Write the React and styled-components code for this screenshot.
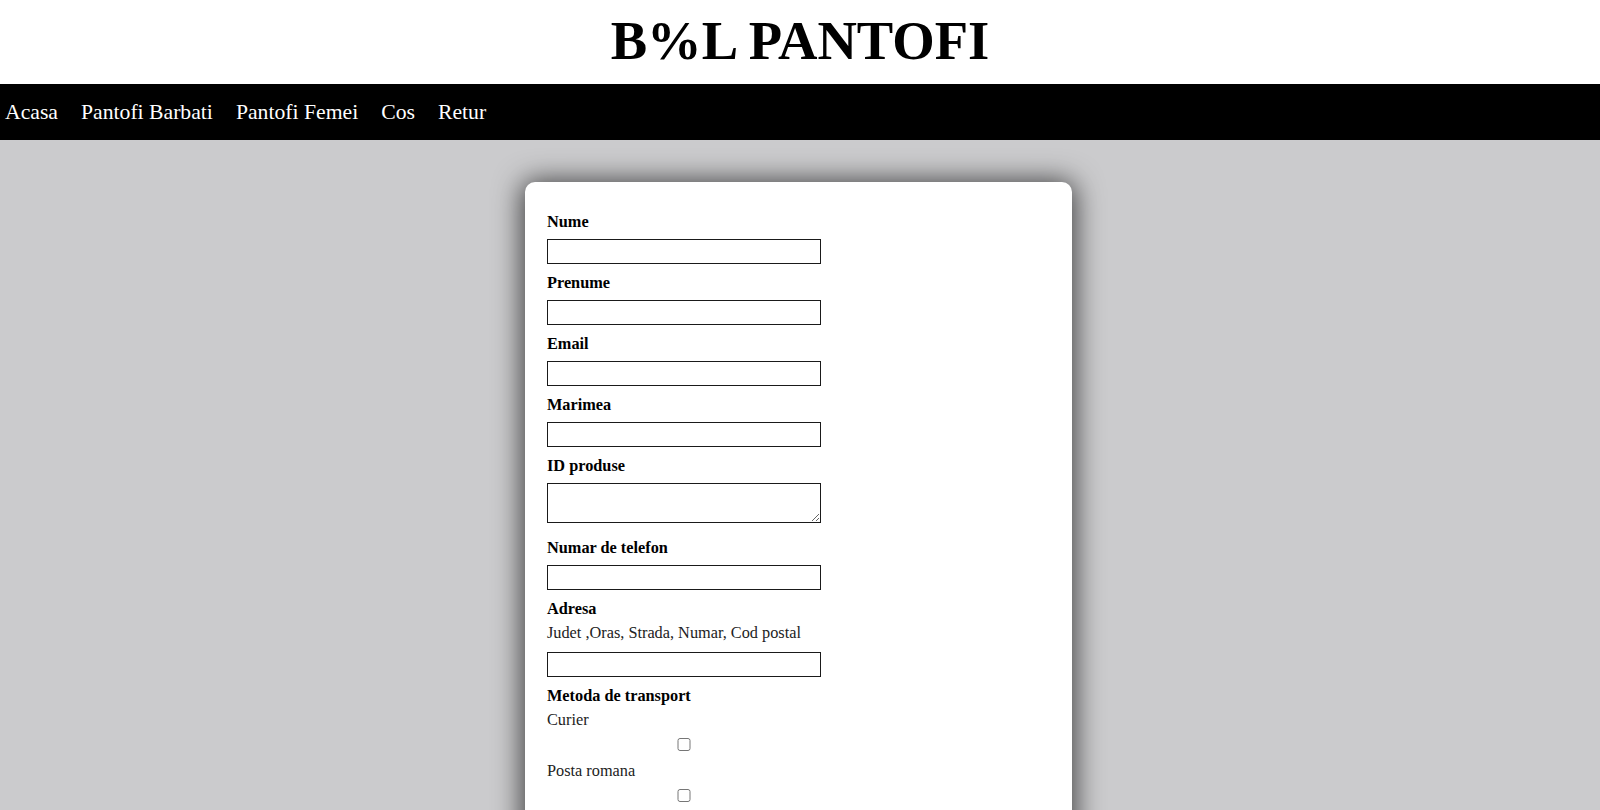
import React from "react";
import styled, { createGlobalStyle } from "styled-components";

const GlobalStyle = createGlobalStyle`
  html, body {
    margin: 0;
    padding: 0;
    background: #cbcbcd;
    font-family: "Liberation Serif", "Times New Roman", serif;
    overflow: hidden;
  }
`;

const Header = styled.header`
  height: 84px;
  background: #fff;
  display: flex;
  align-items: center;
  justify-content: center;
`;

const Title = styled.h1`
  margin: 0;
  padding-bottom: 2px;
  font-size: 54.6px;
  font-weight: bold;
  line-height: 1;
  color: #000;
`;

const Nav = styled.nav`
  height: 56px;
  background: #000;
  display: flex;
  align-items: center;
  gap: 23px;
  padding-left: 5px;
`;

const NavLink = styled.a`
  color: #fff;
  text-decoration: none;
  font-size: 21.7px;
  line-height: 1;
  padding-top: 1px;
`;

const Main = styled.main`
  padding: 42px 3px 0 0;
  display: flex;
  justify-content: center;
`;

const Card = styled.form`
  width: 547px;
  min-height: 700px;
  box-sizing: border-box;
  background: #fff;
  border-radius: 10px;
  box-shadow: 0 2px 28px 3px rgba(0, 0, 0, 0.7);
  padding: 31px 22px;
  display: flex;
  flex-direction: column;
  align-items: flex-start;
`;

const Label = styled.label`
  display: block;
  font-size: 16.3px;
  font-weight: bold;
  color: #000;
  line-height: 18px;
  margin-bottom: ${(p) => p.$gap ?? 8}px;
`;

const Hint = styled.span`
  display: block;
  font-size: 16.3px;
  color: #222;
  line-height: 18px;
  margin-bottom: ${(p) => p.$gap ?? 10}px;
`;

const TextInput = styled.input`
  display: block;
  width: 274px;
  height: 25px;
  box-sizing: border-box;
  border: 1px solid #1a1a1a;
  border-radius: 0;
  margin: 0 0 10px 0;
  padding: 2px 4px;
  font-family: inherit;
  background: #fff;
`;

const TextArea = styled.textarea`
  display: block;
  width: 274px;
  height: 40px;
  box-sizing: border-box;
  border: 1px solid #1a1a1a;
  border-radius: 0;
  margin: 0 0 16px 0;
  padding: 2px 4px;
  font-family: inherit;
`;

const Check = styled.input`
  display: block;
  width: 274px;
  height: 13px;
  margin: 0 0 ${(p) => p.$after ?? 11}px 0;
`;

export default function App() {
  return (
    <>
      <GlobalStyle />
      <Header>
        <Title>B%L PANTOFI</Title>
      </Header>
      <Nav>
        <NavLink href="#">Acasa</NavLink>
        <NavLink href="#">Pantofi Barbati</NavLink>
        <NavLink href="#">Pantofi Femei</NavLink>
        <NavLink href="#">Cos</NavLink>
        <NavLink href="#">Retur</NavLink>
      </Nav>
      <Main>
        <Card onSubmit={(e) => e.preventDefault()}>
          <Label>Nume</Label>
          <TextInput type="text" />
          <Label>Prenume</Label>
          <TextInput type="text" />
          <Label>Email</Label>
          <TextInput type="text" />
          <Label>Marimea</Label>
          <TextInput type="text" />
          <Label>ID produse</Label>
          <TextArea />
          <Label>Numar de telefon</Label>
          <TextInput type="text" />
          <Label $gap={6}>Adresa</Label>
          <Hint>Judet ,Oras, Strada, Numar, Cod postal</Hint>
          <TextInput type="text" />
          <Label $gap={6}>Metoda de transport</Label>
          <Hint $gap={9}>Curier</Hint>
          <Check type="checkbox" $after={11} />
          <Hint $gap={9}>Posta romana</Hint>
          <Check type="checkbox" />
        </Card>
      </Main>
    </>
  );
}
